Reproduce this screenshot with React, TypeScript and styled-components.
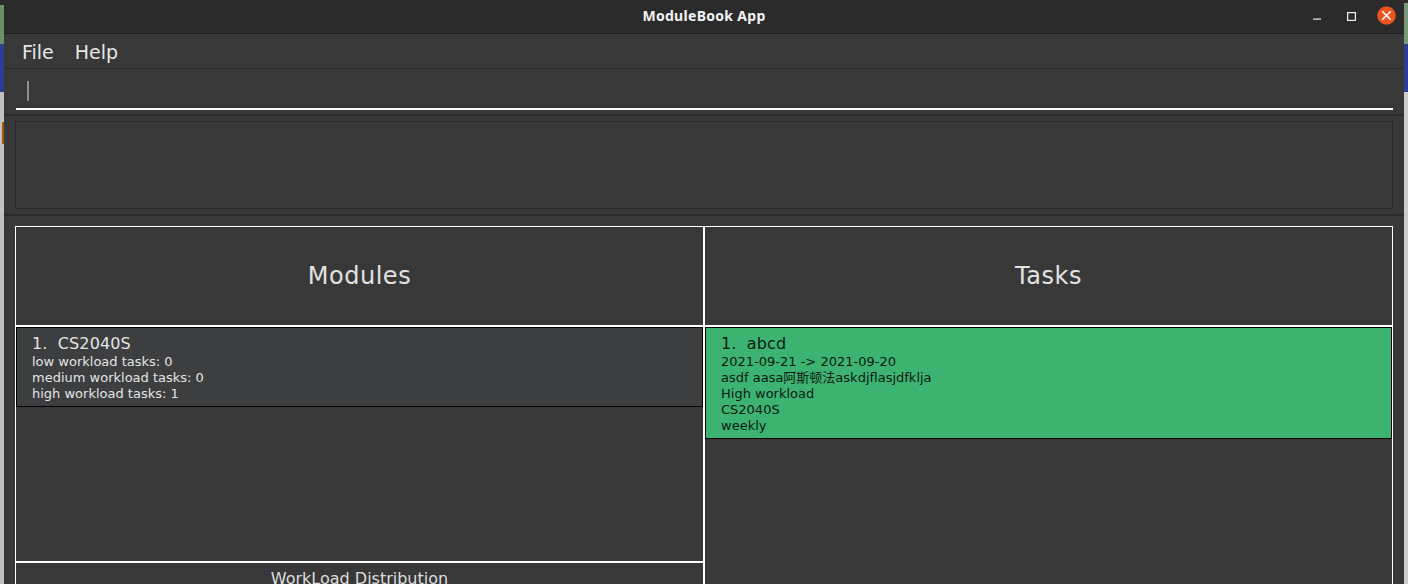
import React from "react";
import styled, { createGlobalStyle } from "styled-components";

const GlobalStyle = createGlobalStyle`
  html, body { margin: 0; padding: 0; background: #c4c4c4; }
  body { font-family: "DejaVu Sans", "Noto Sans CJK SC", sans-serif; }
  #root { width: 1408px; height: 584px; overflow: hidden; }
`;

const Screen = styled.div`
  display: flex;
  width: 1408px;
  height: 584px;
  overflow: hidden;
`;

const DesktopStrip = styled.div<{ $side: "left" | "right" }>`
  flex: none;
  width: 4px;
  position: relative;
  background: ${(p) =>
    p.$side === "left"
      ? "linear-gradient(to bottom, #2b2b2b 0 5px, #6d8e6a 5px 44px, #2f3c92 44px 92px, #c2c2c2 92px)"
      : "linear-gradient(to bottom, #2b2b2b 0 3px, #7b977a 3px 44px, #2f3c96 44px 92px, #cdcdcd 92px)"};
  ${(p) =>
    p.$side === "left"
      ? `&::after {
    content: "";
    position: absolute;
    left: 2px;
    top: 122px;
    width: 2px;
    height: 22px;
    background: #a8560c;
  }`
      : ""}
`;

const Window = styled.div`
  flex: 1;
  min-width: 0;
  display: flex;
  flex-direction: column;
  background: #383838;
`;

const TitleBar = styled.div`
  flex: none;
  height: 33px;
  padding-bottom: 2px;
  box-sizing: border-box;
  border-bottom: 1px solid #1f1f1f;
  background: #2c2b2b;
  display: grid;
  grid-template-columns: 1fr auto 1fr;
  align-items: center;
  height: 34px;
`;

const Title = styled.div`
  grid-column: 2;
  font-family: "Noto Sans", "DejaVu Sans", sans-serif;
  font-weight: 700;
  font-size: 14px;
  color: #f2f2f2;
  letter-spacing: 0.3px;
`;

const Controls = styled.div`
  grid-column: 3;
  justify-self: end;
  display: flex;
  align-items: center;
  padding-right: 8px;
  margin-top: 2px;
`;

const ControlIcon = styled.svg<{ $gap: number }>`
  display: block;
  margin-right: ${(p) => p.$gap}px;
`;

const MenuBar = styled.div`
  flex: none;
  border-bottom: 1px solid #2a2a2a;
  display: flex;
  align-items: center;
  padding: 1px 0 0 7px;
  box-sizing: border-box;
  height: 35px;
`;

const MenuItem = styled.div`
  padding: 0 10px 0 11px;
  font-size: 19px;
  color: #e6e6e6;
`;

const CommandArea = styled.div`
  flex: none;
  padding: 7px 11px 0 12px;
  box-sizing: border-box;
  border-bottom: 2px solid #2a2a2a;
  height: 47px;
`;

const CommandInput = styled.div`
  border-bottom: 2px solid #ffffff;
  padding-left: 11px;
  padding-top: 5px;
  height: 27px;
`;

const Caret = styled.div`
  width: 2px;
  height: 20px;
  background: #8e8e8e;
`;

const ResultArea = styled.div`
  flex: none;
  padding: 5px 11px 5px 11px;
  border-bottom: 2px solid #2a2a2a;
`;

const ResultBox = styled.div`
  height: 86px;
  border: 1px solid #2a2a2a;
  background: #383838;
`;

const Panels = styled.div`
  flex: 1;
  min-height: 0;
  padding: 10px 11px 0 11px;
  display: grid;
  grid-template-columns: 689px 689px;
  align-items: start;
`;

const Column = styled.div`
  display: flex;
  flex-direction: column;
`;

const PanelHeader = styled.div`
  height: 100px;
  box-sizing: border-box;
  border: 1px solid #ffffff;
  display: flex;
  align-items: center;
  justify-content: center;
  font-size: 24px;
  color: #e2e2e2;
  letter-spacing: 0.5px;
`;

const ListBox = styled.div<{ $height: number }>`
  height: ${(p) => p.$height}px;
  box-sizing: border-box;
  border: 1px solid #ffffff;
  display: flex;
  flex-direction: column;
`;

const Card = styled.div<{ $tone: "module" | "task" }>`
  border: 1px solid #000000;
  background: ${(p) => (p.$tone === "task" ? "#3cb371" : "#3c3e40")};
  color: ${(p) => (p.$tone === "task" ? "#0d1a12" : "#e4e4e4")};
  padding: 6px 15px 4px 15px;
`;

const CardTitle = styled.div`
  font-size: 16px;
  line-height: 20px;
  white-space: pre;
  letter-spacing: 0.1px;
`;

const CardLine = styled.div`
  font-size: 13px;
  line-height: 16px;
  white-space: pre;
`;

const WorkloadPanel = styled.div`
  height: 40px;
  border: 1px solid #ffffff;
  border-bottom: 0;
  padding-top: 6px;
  text-align: center;
  font-size: 16px;
  line-height: 19px;
  color: #dedede;
`;

export default function App() {
  return (
    <>
      <GlobalStyle />
      <Screen>
        <DesktopStrip $side="left" />
        <Window>
          <TitleBar>
            <Title>ModuleBook App</Title>
            <Controls>
              <ControlIcon $gap={26} width="8" height="8" viewBox="0 0 8 8">
                <rect x="0" y="5.5" width="8" height="1.2" fill="#f0f0f0" />
              </ControlIcon>
              <ControlIcon $gap={21} width="9" height="9" viewBox="0 0 9 9" style={{ marginTop: -1 }}>
                <rect x="0.6" y="0.6" width="7.8" height="7.8" fill="none" stroke="#f0f0f0" strokeWidth="1.2" />
              </ControlIcon>
              <ControlIcon $gap={0} width="19" height="19" viewBox="0 0 19 19" style={{ marginTop: -3 }}>
                <circle cx="9.5" cy="9.5" r="9.3" fill="#e95420" />
                <path d="M5.7 5.7 L13.3 13.3 M13.3 5.7 L5.7 13.3" stroke="#ffffff" strokeWidth="1.6" strokeLinecap="round" />
              </ControlIcon>
            </Controls>
          </TitleBar>
          <MenuBar>
            <MenuItem>File</MenuItem>
            <MenuItem>Help</MenuItem>
          </MenuBar>
          <CommandArea>
            <CommandInput>
              <Caret />
            </CommandInput>
          </CommandArea>
          <ResultArea>
            <ResultBox />
          </ResultArea>
          <Panels>
            <Column>
              <PanelHeader>Modules</PanelHeader>
              <ListBox $height={236}>
                <Card $tone="module">
                  <CardTitle>1.  CS2040S</CardTitle>
                  <CardLine>low workload tasks: 0</CardLine>
                  <CardLine>medium workload tasks: 0</CardLine>
                  <CardLine>high workload tasks: 1</CardLine>
                </Card>
              </ListBox>
              <WorkloadPanel>WorkLoad Distribution</WorkloadPanel>
            </Column>
            <Column>
              <PanelHeader>Tasks</PanelHeader>
              <ListBox $height={300}>
                <Card $tone="task">
                  <CardTitle>1.  abcd</CardTitle>
                  <CardLine>2021-09-21 -&gt; 2021-09-20</CardLine>
                  <CardLine>asdf aasa阿斯顿法askdjflasjdfklja</CardLine>
                  <CardLine>High workload</CardLine>
                  <CardLine>CS2040S</CardLine>
                  <CardLine>weekly</CardLine>
                </Card>
              </ListBox>
            </Column>
          </Panels>
        </Window>
        <DesktopStrip $side="right" />
      </Screen>
    </>
  );
}
